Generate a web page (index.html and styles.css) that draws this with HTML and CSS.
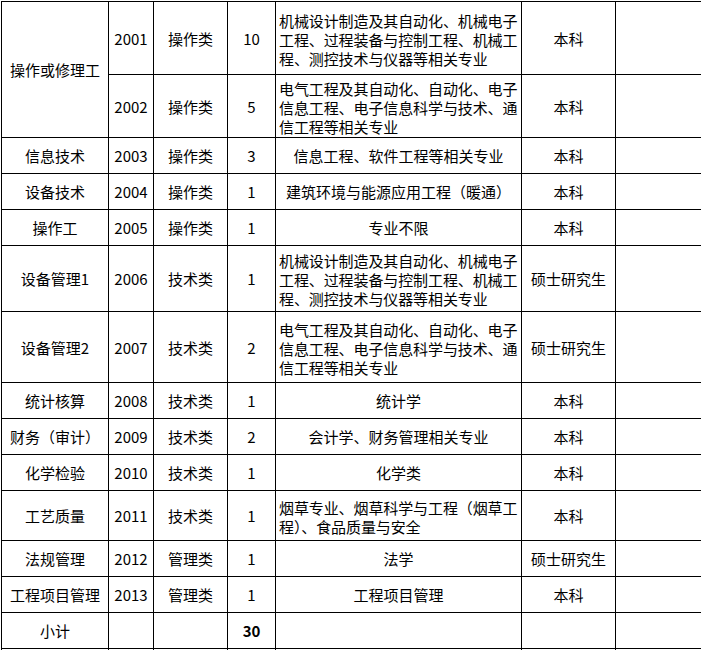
FILE: index.html
```html
<!DOCTYPE html>
<html lang="zh-CN">
<head>
<meta charset="utf-8">
<title>招聘岗位表</title>
<link rel="stylesheet" href="styles.css">
</head>
<body>
<div class="frame">
<table class="jobs">
  <colgroup>
    <col class="c-post"><col class="c-code"><col class="c-type"><col class="c-num"><col class="c-major"><col class="c-edu"><col class="c-note">
  </colgroup>
  <tbody>
    <tr class="h73">
      <td rowspan="2">操作或修理工</td><td>2001</td><td>操作类</td><td>10</td>
      <td class="wrap">机械设计制造及其自动化、机械电子工程、过程装备与控制工程、机械工程、测控技术与仪器等相关专业</td>
      <td>本科</td><td></td>
    </tr>
    <tr class="h63">
      <td>2002</td><td>操作类</td><td>5</td>
      <td class="wrap">电气工程及其自动化、自动化、电子信息工程、电子信息科学与技术、通信工程等相关专业</td>
      <td>本科</td><td></td>
    </tr>
    <tr class="h36">
      <td>信息技术</td><td>2003</td><td>操作类</td><td>3</td><td>信息工程、软件工程等相关专业</td><td>本科</td><td></td>
    </tr>
    <tr class="h36">
      <td>设备技术</td><td>2004</td><td>操作类</td><td>1</td><td>建筑环境与能源应用工程（暖通）</td><td>本科</td><td></td>
    </tr>
    <tr class="h36">
      <td>操作工</td><td>2005</td><td>操作类</td><td>1</td><td>专业不限</td><td>本科</td><td></td>
    </tr>
    <tr class="h66">
      <td>设备管理1</td><td>2006</td><td>技术类</td><td>1</td>
      <td class="wrap">机械设计制造及其自动化、机械电子工程、过程装备与控制工程、机械工程、测控技术与仪器等相关专业</td>
      <td>硕士研究生</td><td></td>
    </tr>
    <tr class="h71">
      <td>设备管理2</td><td>2007</td><td>技术类</td><td>2</td>
      <td class="wrap">电气工程及其自动化、自动化、电子信息工程、电子信息科学与技术、通信工程等相关专业</td>
      <td>硕士研究生</td><td></td>
    </tr>
    <tr class="h36">
      <td>统计核算</td><td>2008</td><td>技术类</td><td>1</td><td>统计学</td><td>本科</td><td></td>
    </tr>
    <tr class="h36">
      <td>财务（审计）</td><td>2009</td><td>技术类</td><td>2</td><td>会计学、财务管理相关专业</td><td>本科</td><td></td>
    </tr>
    <tr class="h36">
      <td>化学检验</td><td>2010</td><td>技术类</td><td>1</td><td>化学类</td><td>本科</td><td></td>
    </tr>
    <tr class="h50">
      <td>工艺质量</td><td>2011</td><td>技术类</td><td>1</td>
      <td class="wrap">烟草专业、烟草科学与工程（烟草工程）、食品质量与安全</td>
      <td>本科</td><td></td>
    </tr>
    <tr class="h36">
      <td>法规管理</td><td>2012</td><td>管理类</td><td>1</td><td>法学</td><td>硕士研究生</td><td></td>
    </tr>
    <tr class="h36">
      <td>工程项目管理</td><td>2013</td><td>管理类</td><td>1</td><td>工程项目管理</td><td>本科</td><td></td>
    </tr>
    <tr class="h36">
      <td>小计</td><td></td><td></td><td class="total">30</td><td></td><td></td><td></td>
    </tr>
    <tr class="h36">
      <td></td><td></td><td></td><td></td><td></td><td></td><td></td>
    </tr>
  </tbody>
</table>
</div>
</body>
</html>
```
FILE: styles.css
```css
html, body {
  margin: 0;
  padding: 0;
  background: #ffffff;
  overflow: hidden;
}
body {
  width: 701px;
  height: 650px;
}
.frame {
  width: 700px;
  height: 649px;
  margin: 1px 0 0 1px;
  overflow: hidden;
}
.jobs {
  border-collapse: collapse;
  table-layout: fixed;
  width: 714px;
  font-family: "Noto Sans CJK SC", "Liberation Sans", sans-serif;
  font-size: 15px;
  line-height: 19px;
  color: #000000;
}
.c-post { width: 107px; }
.c-code { width: 45px; }
.c-type { width: 74px; }
.c-num { width: 48px; }
.c-major { width: 246px; }
.c-edu { width: 94px; }
.c-note { width: 100px; }
.jobs td {
  border: 1px solid #000000;
  text-align: center;
  vertical-align: middle;
  padding: 0 1px;
  white-space: nowrap;
  overflow: hidden;
}
.jobs td.wrap {
  white-space: normal;
  text-align: left;
  padding: 2px 1px 0 3px;
  letter-spacing: -0.1px;
}
.jobs td.total {
  font-weight: bold;
}
.h73 { height: 73px; }
.h63 { height: 63px; }
.h36 { height: 36px; }
.h66 { height: 66px; }
.h71 { height: 71px; }
.h50 { height: 50px; }
```
